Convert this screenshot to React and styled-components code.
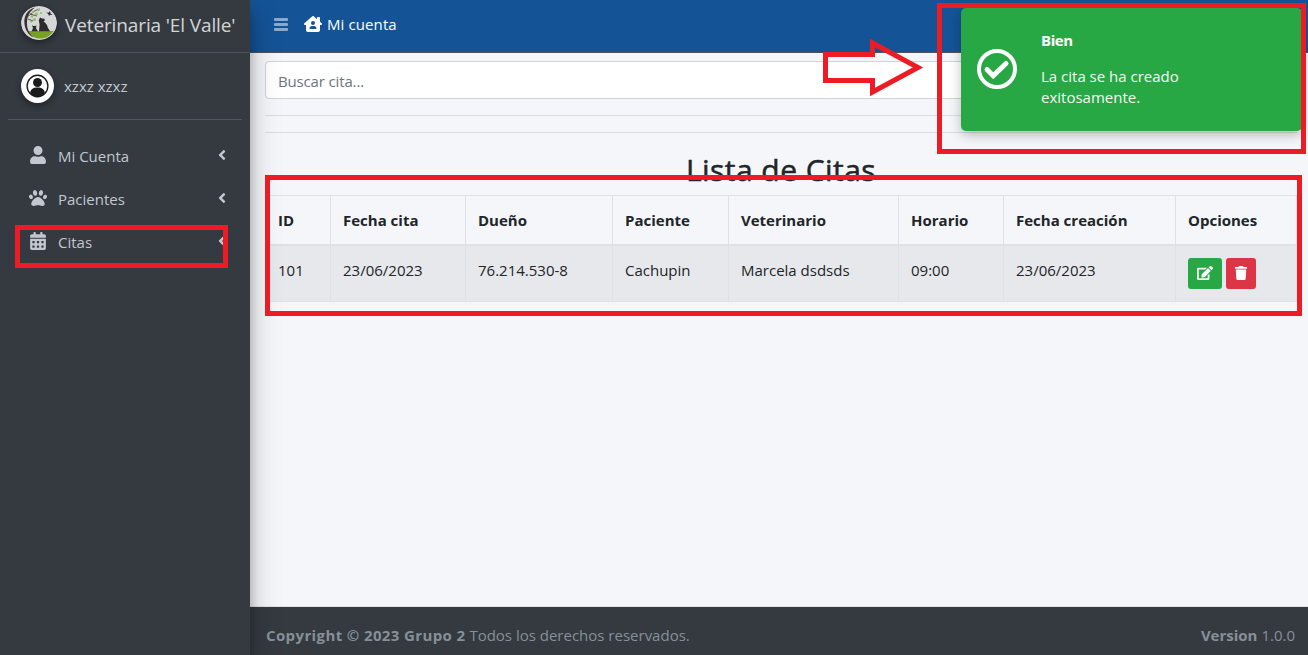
import React from "react";
import styled, { createGlobalStyle, css } from "styled-components";
import { FaUser, FaPaw, FaCalendarAlt, FaAngleLeft, FaEdit, FaTrash } from "react-icons/fa";
import { FaHouseChimneyUser } from "react-icons/fa6";

const Global = createGlobalStyle`
  *, *::before, *::after { box-sizing: border-box; }
  body {
    margin: 0;
    font-family: "Open Sans", "Noto Sans", sans-serif;
    font-size: 15px;
    line-height: 24px;
    color: #212529;
    background: #f4f6f9;
    overflow: hidden;
  }
`;

const Shell = styled.div`
  position: relative;
  display: flex;
  width: 1308px;
  height: 655px;
  overflow: hidden;
`;

const Sidebar = styled.aside`
  position: relative;
  z-index: 2;
  flex: 0 0 250px;
  background: #343a40;
  color: #c2c7d0;
  box-shadow: 0 14px 28px rgba(0, 0, 0, 0.25), 0 10px 10px rgba(0, 0, 0, 0.22);
`;

const Brand = styled.div`
  display: flex;
  align-items: center;
  height: 53px;
  padding: 0 0 4px 21px;
  border-bottom: 1px solid #4b545c;
  color: rgba(255, 255, 255, 0.8);
  font-size: 19px;
  white-space: nowrap;

  > svg {
    margin-top: -3px;
  }
`;

const BrandName = styled.span`
  margin: 1px 0 0 8px;
  letter-spacing: -0.12px;
`;

const Round = styled.svg`
  display: block;
  flex: none;
  border-radius: 50%;
  box-shadow: 0 3px 6px rgba(0, 0, 0, 0.16), 0 3px 6px rgba(0, 0, 0, 0.23);
`;

const UserPanel = styled.div`
  display: flex;
  align-items: center;
  height: 67px;
  margin: 0 8px;
  padding-left: 13px;
  border-bottom: 1px solid #4f5962;
`;

const UserName = styled.span`
  margin-left: 10px;
`;

const Nav = styled.nav`
  display: flex;
  flex-direction: column;
  gap: 3px;
  padding: 16px 8px 0;
`;

const NavItem = styled.div`
  display: flex;
  align-items: center;
  height: 40px;
  padding: 0 12px 0 20px;

  > svg:first-child {
    width: 20px;
    margin-right: 10px;
    margin-top: -3px;
  }

  > svg:last-child {
    margin-left: auto;
    margin-top: -3px;
  }
`;

const Main = styled.div`
  flex: 1;
  min-width: 0;
  display: flex;
  flex-direction: column;
`;

const TopBar = styled.header`
  display: flex;
  align-items: center;
  height: 53px;
  padding: 0 0 4px 24px;
  border-bottom: 1px solid #4b545c;
  background: #145396;
  color: #fff;
`;

const MenuIcon = styled.span`
  display: flex;
  flex-direction: column;
  gap: 2px;
  width: 14px;

  i {
    height: 3px;
    border-radius: 1px;
    background: rgba(255, 255, 255, 0.5);
  }
`;

const HomeLink = styled.span`
  display: flex;
  align-items: center;
  gap: 5px;
  margin-left: 16px;
  letter-spacing: 0.1px;
`;

const Content = styled.main`
  flex: 1;
  padding: 8px 11px 0 15px;
`;

const Search = styled.input`
  display: block;
  width: 100%;
  height: 38px;
  padding: 4px 12px 3px;
  border: 1px solid #ced4da;
  border-radius: 4px;
  background: #fff;
  font: inherit;
  letter-spacing: -0.15px;
  outline: none;

  &::placeholder {
    color: #6c757d;
    opacity: 1;
  }
`;

const Rule = styled.hr`
  margin: 16px 0 0;
  border: 0;
  border-top: 1px solid rgba(0, 0, 0, 0.1);
`;

const Title = styled.h2`
  margin: 18px 0 6px;
  text-align: center;
  font-size: 30px;
  line-height: 38px;
  font-weight: 500;
  letter-spacing: 0.45px;
  -webkit-text-stroke: 0.5px #212529;
`;

const Table = styled.table`
  width: 1031px;
  border-collapse: collapse;
  table-layout: fixed;
  border: 1px solid #dee2e6;
`;

const cell = css`
  padding: 12px;
  border: 1px solid #dee2e6;
  text-align: left;
  vertical-align: top;
  white-space: nowrap;
`;

const Th = styled.th`
  ${cell}
  width: ${(p) => p.$w}px;
  height: 49px;
  padding-bottom: 11px;
  border-bottom-width: 2px;
  font-weight: 700;
`;

const Td = styled.td`
  ${cell}
  height: 57px;
  background: #e7e8eb;
`;

const Actions = styled.div`
  display: flex;
  gap: 4px;
`;

const ActionButton = styled.button`
  display: flex;
  align-items: center;
  justify-content: center;
  width: ${(p) => p.$w}px;
  height: 31px;
  padding: 0;
  border: 0;
  border-radius: 3px;
  background: ${(p) => p.$color};
  color: #fff;
`;

const Footer = styled.footer`
  display: flex;
  justify-content: space-between;
  height: 49px;
  padding: 16px 13px 0 16px;
  border-top: 1px solid #dee2e6;
  background: #343a40;
  color: #869099;
`;

const Copyright = styled.b`
  letter-spacing: 0.38px;
`;

const Toast = styled.div`
  position: absolute;
  z-index: 3;
  top: 8px;
  left: 961px;
  display: flex;
  width: 341px;
  height: 123px;
  padding: 22px 16px 0;
  border-radius: 5px;
  background: #28a745;
  color: #fff;
  line-height: 21px;
  box-shadow: 0 4px 12px rgba(0, 0, 0, 0.25);

  > svg {
    flex: none;
    margin: 19px 24px 0 0;
  }
`;

const ToastTitle = styled.div`
  margin-bottom: 15px;
  font-weight: 700;
  letter-spacing: -0.4px;
`;

const ToastText = styled.div`
  width: 180px;
  opacity: 0.95;
`;

const Highlight = styled.div`
  position: absolute;
  z-index: 4;
  left: ${(p) => p.$x}px;
  top: ${(p) => p.$y}px;
  width: ${(p) => p.$w}px;
  height: ${(p) => p.$h}px;
  border: 5px solid #ed1c24;
`;

const Arrow = styled.svg`
  position: absolute;
  z-index: 4;
  left: 820px;
  top: 36px;
`;

const columns = [
  ["ID", 65],
  ["Fecha cita", 135],
  ["Dueño", 147],
  ["Paciente", 116],
  ["Veterinario", 170],
  ["Horario", 105],
  ["Fecha creación", 172],
  ["Opciones", 121],
];

const row = ["101", "23/06/2023", "76.214.530-8", "Cachupin", "Marcela dsdsds", "09:00", "23/06/2023"];

const menu = [
  ["Mi Cuenta", FaUser],
  ["Pacientes", FaPaw],
  ["Citas", FaCalendarAlt],
];

function ClinicLogo() {
  return (
    <Round width="36" height="34" viewBox="0 0 36 34" preserveAspectRatio="none">
      <ellipse cx="18" cy="17" rx="18" ry="17" fill="#d5d7d9" />
      <path d="M7.500 25h25c-3 5-8 7.500-13.500 7.500S9.500 30 7.500 25z" fill="#78a022" />
      <path d="M14 1.500C6 4 2.500 10 3.500 18c.6 6 4 11 9 13.500-4-4-6.500-8-6.500-14C6 10 9 5 14 1.500z" fill="#3b3032" />
      <path d="M5.500 11c4-1.500 5-5.500 13-8M9 8l7 2M7 13l5 2" stroke="#4b403c" strokeWidth="0.9" fill="none" />
      <g fill="#9bbb62">
        <circle cx="12" cy="6" r="1.300" />
        <circle cx="15.500" cy="8" r="1.500" />
        <circle cx="17.500" cy="4" r="1.200" />
        <circle cx="11" cy="10.500" r="1.200" />
        <circle cx="13.500" cy="13.500" r="1.500" />
        <circle cx="20" cy="7" r="1.100" />
        <circle cx="10" cy="15.500" r="1" />
      </g>
      <path d="M18 25.200l.6-6.500-.8-4.500 1.200-2.700 2 1 2.500.2.300 1.800-1.300 1c2.500 1.500 4 3.500 4.200 6l2.300 3.700z" fill="#302a2c" />
      <path d="M10.500 25.200l1.500-3-1-3 1.500.7h1.800l1.200-.7-.5 3 2 3z" fill="#302a2c" />
      <path d="M25 6.500l2.500.2 1.500-1.700.5 2.300 2 1.700-2.500-.2-1 1.200-.7-2z" fill="#302a2c" />
    </Round>
  );
}

function Avatar() {
  return (
    <Round width="33" height="34" viewBox="0 0 34 34" preserveAspectRatio="none">
      <rect width="34" height="34" fill="#fff" />
      <circle cx="17" cy="17" r="10.700" fill="none" stroke="#1b1b1b" strokeWidth="1.400" />
      <circle cx="17" cy="13.500" r="4.600" fill="#1b1b1b" />
      <path d="M9.500 24c0-3.500 3-5.500 7.500-5.500s7.500 2 7.500 5.500c-2 2.300-4.500 3.500-7.500 3.500s-5.500-1.200-7.500-3.500z" fill="#1b1b1b" />
    </Round>
  );
}

export default function App() {
  return (
    <Shell>
      <Global />
      <Sidebar>
        <Brand>
          <ClinicLogo />
          <BrandName>Veterinaria 'El Valle'</BrandName>
        </Brand>
        <UserPanel>
          <Avatar />
          <UserName>xzxz xzxz</UserName>
        </UserPanel>
        <Nav>
          {menu.map(([label, Icon]) => (
            <NavItem key={label}>
              <Icon size={18} />
              <span>{label}</span>
              <FaAngleLeft size={16} />
            </NavItem>
          ))}
        </Nav>
      </Sidebar>
      <Main>
        <TopBar>
          <MenuIcon>
            <i />
            <i />
            <i />
          </MenuIcon>
          <HomeLink>
            <FaHouseChimneyUser size={18} />
            Mi cuenta
          </HomeLink>
        </TopBar>
        <Content>
          <Search placeholder="Buscar cita..." />
          <Rule />
          <Rule />
          <Title>Lista de Citas</Title>
          <Table>
            <thead>
              <tr>
                {columns.map(([label, w]) => (
                  <Th key={label} $w={w}>{label}</Th>
                ))}
              </tr>
            </thead>
            <tbody>
              <tr>
                {row.map((value, i) => (
                  <Td key={i}>{value}</Td>
                ))}
                <Td>
                  <Actions>
                    <ActionButton $w={34} $color="#28a745"><FaEdit size={16} /></ActionButton>
                    <ActionButton $w={30} $color="#dc3545"><FaTrash size={14} /></ActionButton>
                  </Actions>
                </Td>
              </tr>
            </tbody>
          </Table>
        </Content>
        <Footer>
          <span><Copyright>Copyright © 2023 Grupo 2</Copyright> Todos los derechos reservados.</span>
          <span><b>Version</b> 1.0.0</span>
        </Footer>
      </Main>
      <Toast>
        <svg width="40" height="40" viewBox="0 0 40 40" fill="none" stroke="#fff">
          <circle cx="20" cy="20" r="18" strokeWidth="4" />
          <path d="M10 20.500l6.200 6.200L29 14.500" strokeWidth="5" strokeLinecap="round" />
        </svg>
        <div>
          <ToastTitle>Bien</ToastTitle>
          <ToastText>La cita se ha creado exitosamente.</ToastText>
        </div>
      </Toast>
      <Highlight $x={937} $y={3} $w={369} $h={151} />
      <Highlight $x={265} $y={175} $w={1037} $h={141} />
      <Highlight $x={15} $y={225} $w={213} $h={43} />
      <Arrow width="104" height="64" viewBox="0 0 104 64">
        <path d="M5.500 18.500H52.500V7L98 31.500 52.500 56V44.500H5.500z" fill="none" stroke="#ed1c24" strokeWidth="5" />
      </Arrow>
    </Shell>
  );
}
